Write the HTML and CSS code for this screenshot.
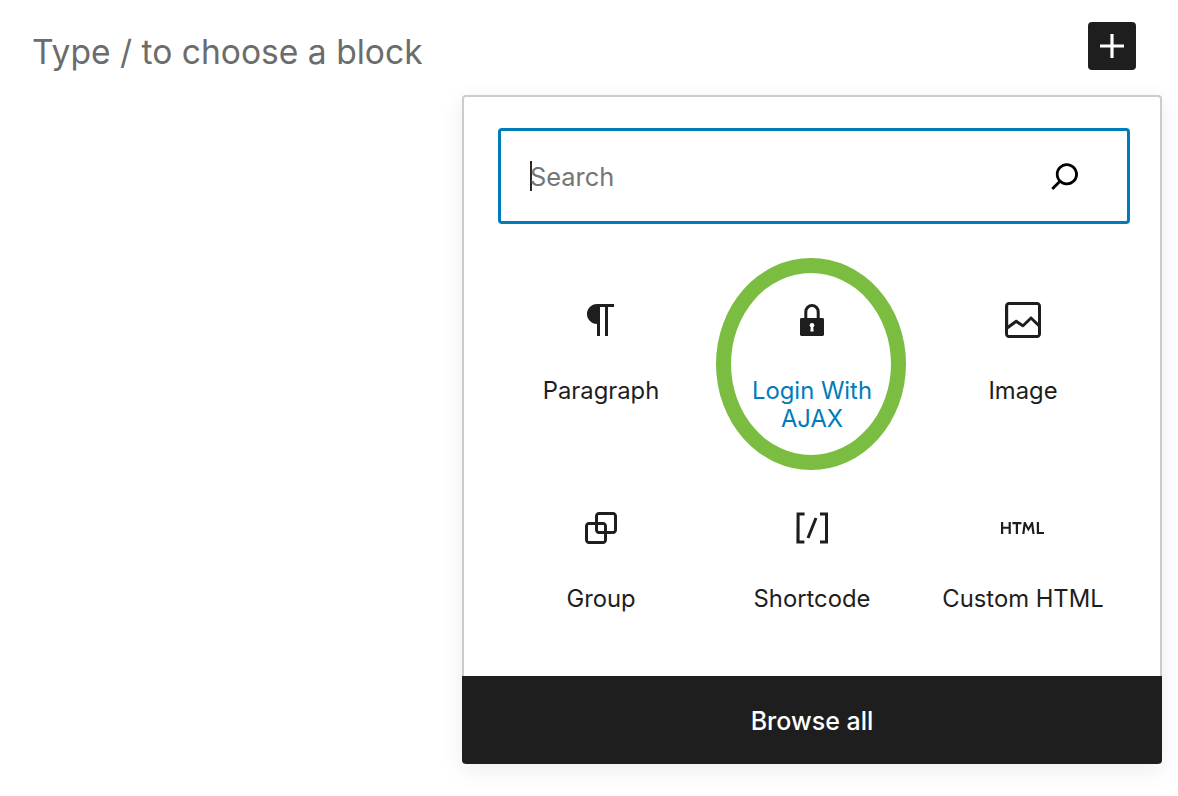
FILE: index.html
```html
<!DOCTYPE html>
<html lang="en">
<head>
<meta charset="utf-8">
<title>Block inserter</title>
<link rel="stylesheet" href="styles.css">
</head>
<body>
<div class="editor">
  <header class="block-row">
    <p class="placeholder">Type / to choose a block</p>
    <button class="add-btn" aria-label="Add block">
      <svg class="icon" viewBox="0 0 24 24"><path d="M18 11.2h-5.2V6h-1.6v5.2H6v1.6h5.2V18h1.6v-5.2H18z"/></svg>
    </button>
  </header>
  <section class="popover">
    <div class="popover-body">
      <div class="search">
        <span class="caret"></span>
        <span class="search-text">Search</span>
        <svg class="search-icon" viewBox="0 0 24 24"><path d="M13 5c-3.3 0-6 2.7-6 6 0 1.4.5 2.7 1.3 3.7l-3.8 3.8 1.1 1.1 3.8-3.8c1 .8 2.3 1.3 3.7 1.3 3.3 0 6-2.7 6-6S16.3 5 13 5zm0 10.5c-2.5 0-4.5-2-4.5-4.5s2-4.5 4.5-4.5 4.5 2 4.5 4.5-2 4.5-4.5 4.5z"/></svg>
      </div>
      <div class="grid">
        <div class="item">
          <svg class="icon" viewBox="0 0 24 24"><path d="m9.99609 14v-.2251l.00391.0001v6.225h1.5v-14.5h2.5v14.5h1.5v-14.5h3v-1.5h-8.50391c-2.76142 0-5 2.23858-5 5 0 2.7614 2.23858 5 5 5z"/></svg>
          <span class="label">Paragraph</span>
        </div>
        <div class="item item-active">
          <svg class="icon" viewBox="0 0 24 24">
            <path class="shackle" d="M8.9 11.5V7.9a3.1 3.1 0 0 1 6.2 0v3.6"/>
            <rect x="6" y="11" width="12" height="9" rx=".7"/>
            <circle class="keyhole" cx="12" cy="14.6" r="1.15"/>
            <path class="keyhole" d="M11.45 15h1.1l.3 2.8h-1.7z"/>
          </svg>
          <span class="label">Login With AJAX</span>
          <span class="highlight"></span>
        </div>
        <div class="item">
          <svg class="icon" viewBox="0 0 24 24"><path d="M19 3H5c-1.1 0-2 .9-2 2v14c0 1.1.9 2 2 2h14c1.1 0 2-.9 2-2V5c0-1.1-.9-2-2-2zM5 4.5h14c.3 0 .5.2.5.5v8.4l-3-2.9c-.3-.3-.8-.3-1 0L11.9 14 9 12c-.3-.2-.6-.2-.8 0l-3.6 2.6V5c-.1-.3.1-.5.4-.5zm14 15H5c-.3 0-.5-.2-.5-.5v-2.4l4.1-3 3 1.9c.3.2.7.2.9-.1L16 12l3.5 3.4V19c0 .3-.2.5-.5.5z"/></svg>
          <span class="label">Image</span>
        </div>
        <div class="item">
          <svg class="icon" viewBox="0 0 24 24"><path d="M18 4h-7c-1.1 0-2 .9-2 2v3H6c-1.1 0-2 .9-2 2v7c0 1.1.9 2 2 2h7c1.1 0 2-.9 2-2v-3h3c1.1 0 2-.9 2-2V6c0-1.1-.9-2-2-2zm-4.5 14c0 .3-.2.5-.5.5H6c-.3 0-.5-.2-.5-.5v-7c0-.3.2-.5.5-.5h3V13c0 1.1.9 2 2 2h2.5v3zm0-4.5H11c-.3 0-.5-.2-.5-.5v-2.5H13c.3 0 .5.2.5.5v2.5zm5-.5c0 .3-.2.5-.5.5h-3V11c0-1.1-.9-2-2-2h-2.5V6c0-.3.2-.5.5-.5h7c.3 0 .5.2.5.5v7z"/></svg>
          <span class="label">Group</span>
        </div>
        <div class="item">
          <svg class="icon" viewBox="0 0 24 24"><path d="M16 4.2v1.5h2.5v12.5H16v1.5h4V4.2h-4zM4.2 19.8h4v-1.5H5.8V5.8h2.5V4.2h-4l-.1 15.6zm5.1-3.1l1.4.6 4-10-1.4-.6-4 10z"/></svg>
          <span class="label">Shortcode</span>
        </div>
        <div class="item">
          <svg class="icon" viewBox="0 0 24 24"><path d="M4.8 11.4H2.1V9H1v6h1.1v-2.6h2.7V15h1.1V9H4.8v2.4zm1.9-1.3h1.7V15h1.1v-4.9h1.7V9H6.7v1.1zM16.2 9l-1.5 2.7L13.3 9h-.9l-.8 6h1.1l.5-4 1.5 2.8 1.5-2.8.5 4h1.1L17 9h-.8zm3.8 5V9h-1.1v6h3.6v-1H20z"/></svg>
          <span class="label">Custom HTML</span>
        </div>
      </div>
    </div>
    <footer class="browse">Browse all</footer>
  </section>
</div>
</body>
</html>
```
FILE: styles.css
```css
* { box-sizing: border-box; }
html, body { margin: 0; height: 100%; background: #fff; }
body { font-family: Inter, "Liberation Sans", sans-serif; color: #1e1e1e; overflow: hidden; }
.editor { display: flex; flex-direction: column; align-items: flex-end; padding: 22px 16px 0 32px; }
.block-row { display: flex; justify-content: space-between; align-items: flex-start; align-self: stretch; padding-right: 26px; }
.placeholder { margin: 6px 0 0; font-size: 33.6px; line-height: 48px; color: #6c6c6c; }
.add-btn { width: 48px; height: 48px; padding: 0; border: 0; border-radius: 4px; background: #1e1e1e; display: flex; }
.add-btn .icon { fill: #fff; }
.icon { width: 48px; height: 48px; display: block; fill: #1e1e1e; flex: none; }
.popover { width: 700px; height: 669px; margin-top: 19px; display: flex; flex-direction: column; border-radius: 4px; box-shadow: 0 6px 24px rgba(25, 30, 35, .08); }
.popover-body { flex: 1; min-height: 0; border: 2px solid #ccc; border-bottom: 0; border-radius: 4px 4px 0 0; padding: 31px 30px 0 34px; }
.search { height: 96px; width: 632px; border: 3px solid #007cba; border-radius: 4px; display: flex; align-items: center; padding: 1px 40px 0 29px; }
.caret { width: 2px; height: 30px; background: #2a2a2a; flex: none; margin-top: -1px; }
.search-text { flex: 1; font-size: 25.4px; color: #757575; margin-left: -2px; }
.search-icon { width: 44px; height: 44px; fill: #000; display: block; margin-top: -1px; }
.grid { display: grid; grid-template-columns: repeat(3, 211px); grid-auto-rows: 208px; margin: 72px 0 0 -3px; }
.item { position: relative; display: flex; flex-direction: column; align-items: center; text-align: center; }
.label { margin-top: 33px; max-width: 170px; padding-left: 1px; font-size: 23.8px; line-height: 28px; }
.item-active .label { color: #007cba; }
.highlight { position: absolute; left: 10px; top: -38px; width: 190px; height: 212px; border: 15px solid #7abd41; border-radius: 50%; }
.browse { flex: none; height: 88px; padding-top: 2px; background: #1e1e1e; color: #fff; border-radius: 0 0 4px 4px; display: flex; align-items: center; justify-content: center; font-size: 25px; font-weight: 500; }
.shackle { fill: none; stroke: #1e1e1e; stroke-width: 1.5; }
.keyhole { fill: #fff; }
```
